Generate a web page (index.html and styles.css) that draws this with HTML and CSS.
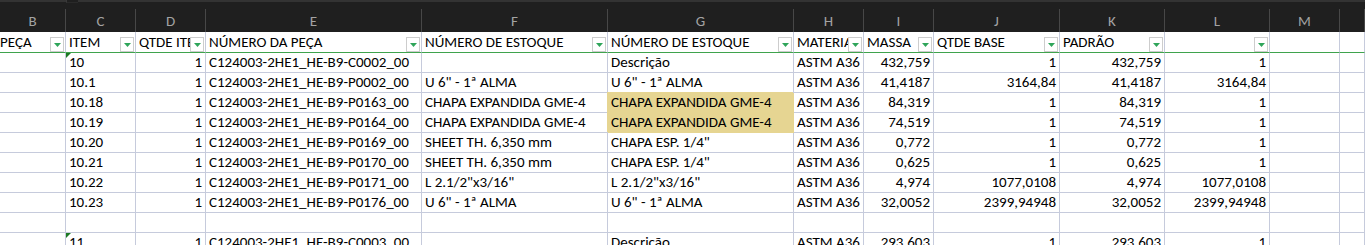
FILE: index.html
```html
<!DOCTYPE html>
<html lang="pt">
<head>
<meta charset="utf-8">
<title>Planilha</title>
<link rel="stylesheet" href="styles.css">
</head>
<body>
<div class="sheet">
  <div class="topbar"><span class="notch"></span></div>

  <div class="ch">B</div><div class="ch">C</div><div class="ch">D</div><div class="ch">E</div><div class="ch">F</div><div class="ch">G</div><div class="ch">H</div><div class="ch">I</div><div class="ch">J</div><div class="ch">K</div><div class="ch">L</div><div class="ch">M</div><div class="ch"></div>

  <div class="hd"><span class="ht">PEÇA</span><span class="fb"><svg viewBox="0 0 7 4" width="7" height="4"><polygon points="0,0 7,0 3.5,4"/></svg></span></div>
  <div class="hd"><span class="ht">ITEM</span><span class="fb"><svg viewBox="0 0 7 4" width="7" height="4"><polygon points="0,0 7,0 3.5,4"/></svg></span></div>
  <div class="hd"><span class="ht">QTDE ITEM</span><span class="fb"><svg viewBox="0 0 7 4" width="7" height="4"><polygon points="0,0 7,0 3.5,4"/></svg></span></div>
  <div class="hd"><span class="ht">NÚMERO DA PEÇA</span><span class="fb"><svg viewBox="0 0 7 4" width="7" height="4"><polygon points="0,0 7,0 3.5,4"/></svg></span></div>
  <div class="hd"><span class="ht">NÚMERO DE ESTOQUE</span><span class="fb"><svg viewBox="0 0 7 4" width="7" height="4"><polygon points="0,0 7,0 3.5,4"/></svg></span></div>
  <div class="hd"><span class="ht">NÚMERO DE ESTOQUE</span><span class="fb"><svg viewBox="0 0 7 4" width="7" height="4"><polygon points="0,0 7,0 3.5,4"/></svg></span></div>
  <div class="hd"><span class="ht">MATERIAL</span><span class="fb"><svg viewBox="0 0 7 4" width="7" height="4"><polygon points="0,0 7,0 3.5,4"/></svg></span></div>
  <div class="hd"><span class="ht">MASSA</span><span class="fb"><svg viewBox="0 0 7 4" width="7" height="4"><polygon points="0,0 7,0 3.5,4"/></svg></span></div>
  <div class="hd"><span class="ht">QTDE BASE</span><span class="fb"><svg viewBox="0 0 7 4" width="7" height="4"><polygon points="0,0 7,0 3.5,4"/></svg></span></div>
  <div class="hd"><span class="ht">PADRÃO</span><span class="fb"><svg viewBox="0 0 7 4" width="7" height="4"><polygon points="0,0 7,0 3.5,4"/></svg></span></div>
  <div class="hd"><span class="ht"></span><span class="fb"><svg viewBox="0 0 7 4" width="7" height="4"><polygon points="0,0 7,0 3.5,4"/></svg></span></div>
  <div class="hd"></div>
  <div class="hd"></div>

  <!-- row 1 -->
  <div class="c"></div><div class="c err">10</div><div class="c r">1</div><div class="c">C124003-2HE1_HE-B9-C0002_00</div><div class="c"></div><div class="c">Descrição</div><div class="c">ASTM A36</div><div class="c r">432,759</div><div class="c r">1</div><div class="c r">432,759</div><div class="c r">1</div><div class="c"></div><div class="c"></div>
  <!-- row 2 -->
  <div class="c"></div><div class="c">10.1</div><div class="c r">1</div><div class="c">C124003-2HE1_HE-B9-P0002_00</div><div class="c">U 6" - 1ª ALMA</div><div class="c">U 6" - 1ª ALMA</div><div class="c">ASTM A36</div><div class="c r">41,4187</div><div class="c r">3164,84</div><div class="c r">41,4187</div><div class="c r">3164,84</div><div class="c"></div><div class="c"></div>
  <!-- row 3 -->
  <div class="c"></div><div class="c">10.18</div><div class="c r">1</div><div class="c">C124003-2HE1_HE-B9-P0163_00</div><div class="c">CHAPA EXPANDIDA GME-4</div><div class="c hl">CHAPA EXPANDIDA GME-4</div><div class="c">ASTM A36</div><div class="c r">84,319</div><div class="c r">1</div><div class="c r">84,319</div><div class="c r">1</div><div class="c"></div><div class="c"></div>
  <!-- row 4 -->
  <div class="c"></div><div class="c">10.19</div><div class="c r">1</div><div class="c">C124003-2HE1_HE-B9-P0164_00</div><div class="c">CHAPA EXPANDIDA GME-4</div><div class="c hl">CHAPA EXPANDIDA GME-4</div><div class="c">ASTM A36</div><div class="c r">74,519</div><div class="c r">1</div><div class="c r">74,519</div><div class="c r">1</div><div class="c"></div><div class="c"></div>
  <!-- row 5 -->
  <div class="c"></div><div class="c">10.20</div><div class="c r">1</div><div class="c">C124003-2HE1_HE-B9-P0169_00</div><div class="c">SHEET TH. 6,350 mm</div><div class="c">CHAPA ESP. 1/4"</div><div class="c">ASTM A36</div><div class="c r">0,772</div><div class="c r">1</div><div class="c r">0,772</div><div class="c r">1</div><div class="c"></div><div class="c"></div>
  <!-- row 6 -->
  <div class="c"></div><div class="c">10.21</div><div class="c r">1</div><div class="c">C124003-2HE1_HE-B9-P0170_00</div><div class="c">SHEET TH. 6,350 mm</div><div class="c">CHAPA ESP. 1/4"</div><div class="c">ASTM A36</div><div class="c r">0,625</div><div class="c r">1</div><div class="c r">0,625</div><div class="c r">1</div><div class="c"></div><div class="c"></div>
  <!-- row 7 -->
  <div class="c"></div><div class="c">10.22</div><div class="c r">1</div><div class="c">C124003-2HE1_HE-B9-P0171_00</div><div class="c">L 2.1/2"x3/16"</div><div class="c">L 2.1/2"x3/16"</div><div class="c">ASTM A36</div><div class="c r">4,974</div><div class="c r">1077,0108</div><div class="c r">4,974</div><div class="c r">1077,0108</div><div class="c"></div><div class="c"></div>
  <!-- row 8 -->
  <div class="c"></div><div class="c">10.23</div><div class="c r">1</div><div class="c">C124003-2HE1_HE-B9-P0176_00</div><div class="c">U 6" - 1ª ALMA</div><div class="c">U 6" - 1ª ALMA</div><div class="c">ASTM A36</div><div class="c r">32,0052</div><div class="c r">2399,94948</div><div class="c r">32,0052</div><div class="c r">2399,94948</div><div class="c"></div><div class="c"></div>
  <!-- row 9 -->
  <div class="c"></div><div class="c"></div><div class="c"></div><div class="c"></div><div class="c"></div><div class="c"></div><div class="c"></div><div class="c"></div><div class="c"></div><div class="c"></div><div class="c"></div><div class="c"></div><div class="c"></div>
  <!-- row 10 -->
  <div class="c"></div><div class="c err">11</div><div class="c r">1</div><div class="c">C124003-2HE1_HE-B9-C0003_00</div><div class="c"></div><div class="c">Descrição</div><div class="c">ASTM A36</div><div class="c r">293,603</div><div class="c r">1</div><div class="c r">293,603</div><div class="c r">1</div><div class="c"></div><div class="c"></div>
</div>
</body>
</html>
```

FILE: styles.css
```css
html, body {
  margin: 0;
  padding: 0;
  background: #ffffff;
  overflow: hidden;
}

.sheet {
  display: grid;
  grid-template-columns: 66px 70px 70px 216px 186px 186px 70px 70px 126px 105px 105px 70px 1fr;
  grid-template-rows: 9px 23px 21px;
  grid-auto-rows: 20px;
  width: 1365px;
  font-family: "Carlito", "Liberation Sans", sans-serif;
  font-size: 15px;
  color: #000;
}

.topbar {
  grid-column: 1 / -1;
  background: #1f1f1f;
  border-top: 2px solid #333333;
  box-sizing: border-box;
  position: relative;
}

.notch {
  position: absolute;
  left: 66px;
  top: -2px;
  width: 12px;
  height: 3px;
  background: #1f1f1f;
  border-left: 1px solid #3a3a3a;
  border-bottom: 1px solid #2a2a2a;
  box-sizing: border-box;
}

.ch {
  background: #1f1f1f;
  color: #a3a3a3;
  border-right: 1px solid #474747;
  box-sizing: border-box;
  display: flex;
  align-items: center;
  justify-content: center;
  font-size: 15px;
  line-height: 1;
  padding-top: 1px;
}

.hd {
  display: flex;
  align-items: flex-end;
  box-sizing: border-box;
  border-right: 1px solid #c6cbdc;
  border-bottom: 1px solid #3fa34d;
  padding: 0 1px 0 3px;
  min-width: 0;
  overflow: hidden;
  white-space: nowrap;
}

.hd:first-child { padding-left: 0; }

.ht {
  flex: 1;
  min-width: 0;
  overflow: hidden;
  line-height: 18px;
  padding-bottom: 1px;
}

.sheet > .hd:nth-child(15) { padding-left: 0; }

.fb {
  flex: none;
  width: 14px;
  height: 15px;
  box-sizing: border-box;
  border: 1px solid #cdcdcd;
  background: #ffffff;
  display: flex;
  align-items: center;
  justify-content: center;
  margin-bottom: 0;
}

.fb svg { display: block; fill: #2fa55a; }

.c {
  box-sizing: border-box;
  border-right: 1px solid #c6cbdc;
  border-bottom: 1px solid #c6cbdc;
  padding: 0 3px 1px 3px;
  display: flex;
  align-items: flex-end;
  line-height: 18px;
  white-space: nowrap;
  overflow: hidden;
  min-width: 0;
  position: relative;
}

.c.r { justify-content: flex-end; }

.c.hl {
  background: #e6d592;
  border-right-color: #e6d592;
  border-bottom-color: #e6d592;
  box-shadow: -1px -1px 0 #e6d592;
}

.c.err::before {
  content: "";
  position: absolute;
  left: 0;
  top: 0;
  width: 0;
  height: 0;
  border-top: 5px solid #1d7a24;
  border-right: 5px solid transparent;
}
```
